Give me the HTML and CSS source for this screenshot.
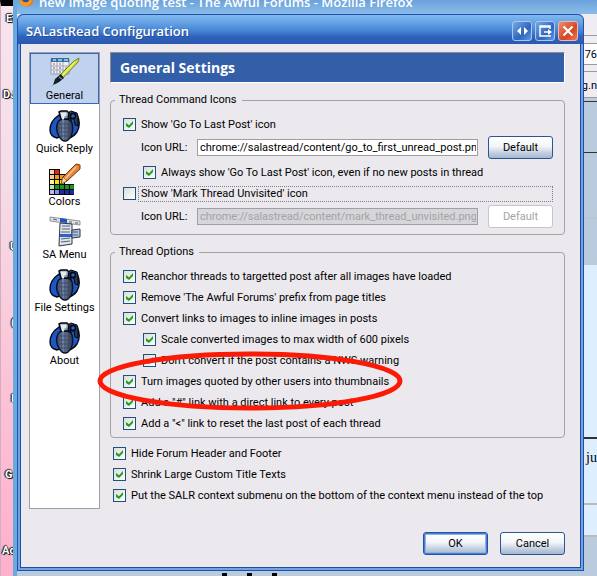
FILE: index.html
```html
<!DOCTYPE html>
<html lang="en">
<head>
<meta charset="utf-8">
<title>SALastRead Configuration</title>
<link rel="stylesheet" href="styles.css">
</head>
<body>
<svg class="defs" aria-hidden="true">
  <defs>
    <linearGradient id="metal" x1="0" x2="1">
      <stop offset="0" stop-color="#33405a"/><stop offset=".4" stop-color="#7385a8"/><stop offset="1" stop-color="#2c3850"/>
    </linearGradient>
    <symbol id="grenade" viewBox="0 0 32 32">
      <path d="M10 5C4 9 1 15 1 20c0 4 3 7 7 8l5-2V8z" fill="#1c56c8" stroke="#05070f" stroke-width="1.400"/>
      <path d="M18 4c3-2 8-2 10 1 3 5 3 12 0 17-2 3-5 5-8 6l-2-9 4-9z" fill="#1c56c8" stroke="#05070f" stroke-width="1.400"/>
      <path d="M17 4l5-3 6 2 1 3v10l-3-1-1-6-7-1z" fill="#2b3852" stroke="#05070f"/>
      <circle cx="24" cy="6" r="2.500" fill="#2a62cf" stroke="#05070f" stroke-width="1.400"/>
      <path d="M9 12c1-2 4-3 7-3s6 1 7 4c1 4 1 9-1 13-1 3-4 5-6 5s-5-2-6-5c-3-5-3-10-1-14z" fill="url(#metal)" stroke="#0a1020" stroke-width="1.400"/>
      <path d="M9 14h14M8 18h15M8 22h15M10 26h12M12 11l1 19M16 10v20M20 11l-1 19" fill="none" stroke="#33425f" stroke-width=".7"/>
      <path d="M10 2l2-1h6l2 2-1 6h-7z" fill="#8896ac" stroke="#05070f" stroke-width="1.400"/>
      <path d="M11.500 2.500h6v3l-2 1-.5 3h-2z" fill="#e6ebf2"/>
    </symbol>
    <symbol id="general" viewBox="0 0 32 32">
      <path d="M2 2h18v15H2z" fill="#eef1f6" stroke="#8c98ad"/>
      <path d="M2 1h18v4H2z" fill="#2f6f9d"/>
      <path d="M4 3h3M9 3h4M15 3h4" stroke="#b9d7ea" stroke-width="1.400"/>
      <path d="M2 9h18M2 13h18M8 5v12M14 5v12" stroke="#9ba5b7" fill="none"/>
      <path d="M4 7h2M10 7h2M16 11h2M4 15h2" stroke="#d25648"/>
      <path d="M10 11h2M4 11h2M10 15h2" stroke="#58657c"/>
      <path d="M25 4l5-3-1 4L11 24l-5 3 2-6z" fill="#d3e236" stroke="#5e6b16" stroke-width=".8"/>
      <path d="M26 5L11 21" stroke="#f7ffa1"/>
      <path d="M12 17l3 4-5 4-6 3 2-6z" fill="#16202c"/>
      <path d="M10 20l3 2M4 28l-2 2" stroke="#a3afb6"/>
    </symbol>
    <symbol id="colors" viewBox="0 0 32 32">
      <path d="M0 6h11v5h5v10h9v11H0z" fill="#080808"/>
      <path d="M1 7h4v4H1z" fill="#fbd9b0"/><path d="M6 7h4v4H6z" fill="#f02218"/>
      <path d="M1 12h4v4H1z" fill="#f7c891"/><path d="M6 12h4v4H6zM11 12h4v4h-4z" fill="#f09a24"/>
      <path d="M1 17h4v4H1z" fill="#fff5a0"/><path d="M6 17h4v4H6zM11 17h4v4h-4z" fill="#f2e313"/>
      <path d="M1 22h4v4H1z" fill="#b8e6b0"/><path d="M6 22h4v4H6zM11 22h4v4h-4zM16 22h4v4h-4zM21 22h4v4h-4z" fill="#19971d"/>
      <path d="M1 27h4v4H1z" fill="#b7b9f1"/><path d="M6 27h4v4H6z" fill="#8790e6"/><path d="M11 27h4v4h-4zM16 27h4v4h-4zM21 27h4v4h-4z" fill="#1b2aa8"/>
      <path d="M27 1l4 1v4L18 18l-6 3 2-7z" fill="#e8843a" stroke="#70380f"/>
      <path d="M27 4L16 16" stroke="#ffc58d" stroke-width="1.500"/>
      <path d="M14 14l4 4-6 3z" fill="#f3d9ae" stroke="#70380f" stroke-width=".6"/>
    </symbol>
    <symbol id="menu" viewBox="0 0 32 32">
      <path d="M1 1l30 4v4L1 5z" fill="#dfe1e6" stroke="#777c86" stroke-width=".8"/>
      <path d="M11 2l7 1v4l-7-1z" fill="#1e55bd"/>
      <path d="M4 3l4 1M20 6h3M26 7h3" stroke="#555b67"/>
      <path d="M11 7l12 1v20l-13 2z" fill="#dde4ef" stroke="#30353f"/>
      <path d="M13 10h8M13 13h8M12 16h9M12 23l9-1M12 26l9-1" stroke="#59616f" fill="none"/>
      <path d="M11 18h12v3H11z" fill="#2a63c4"/>
      <path d="M23 14l8-1v8l-8 1z" fill="#b9c5d8" stroke="#30353f"/>
      <path d="M24 16h5M24 19h5" stroke="#2e5ea9"/>
    </symbol>
  </defs>
</svg>

<div class="desktop" aria-hidden="true">
  <div class="wallpaper">
    <span class="tag t1">Ev</span><span class="tag t2">DJ</span><span class="tag t3">U</span><span class="tag t4">(</span><span class="tag t5">I</span><span class="tag t6">G</span><span class="tag t7">Ac</span>
  </div>
  <div class="browser">
    <div class="browser-title">
      <svg class="fox" viewBox="0 0 16 16"><circle cx="8" cy="8" r="7.500" fill="#e8761b"/><circle cx="8" cy="7" r="4.500" fill="#24509d"/><path d="M1 6c1 5 5 6 9 4l3-5c2 5-1 10-6 10S0 11 1 6z" fill="#f39a22"/></svg>
      <span>new image quoting test - The Awful Forums - Mozilla Firefox</span>
    </div>
    <div class="browser-page">
      <div class="chrome menu-strip"></div>
      <div class="chrome url-strip"><span class="url-end">76</span></div>
      <div class="chrome tab-strip">g.n</div>
      <div class="post gap"></div>
      <div class="post head"></div>
      <div class="post head second"></div>
      <div class="post spacer"></div>
      <div class="post light tall"></div>
      <div class="post light reply"><span>t ju</span></div>
      <div class="post light last"></div>
      <div class="post rest"><i></i><i></i><i></i></div>
    </div>
  </div>
</div>

<form class="dialog" onsubmit="return false">
  <header class="titlebar">
    <h1>SALastRead Configuration</h1>
    <div class="window-buttons">
      <button type="button" aria-label="Resize"><svg viewBox="0 0 18 18"><path d="M8 5v8L4 9zM11 5v8l4-4z" fill="#fff"/></svg></button>
      <button type="button" aria-label="Move out"><svg viewBox="0 0 18 18"><path d="M14 7V4H4v10h10v-1M4 5h10M8 10h6" fill="none" stroke="#fff" stroke-width="1.500"/><path d="M12 7l4 3-4 3z" fill="#fff"/></svg></button>
      <button type="button" class="close" aria-label="Close"><svg viewBox="0 0 18 18"><path d="M4.500 4.500l9 9M13.500 4.500l-9 9" stroke="#fff" stroke-width="2.200"/></svg></button>
    </div>
  </header>

  <div class="content">
    <nav class="sidebar">
      <button type="button" class="pane selected"><svg><use href="#general"/></svg>General</button>
      <button type="button" class="pane"><svg><use href="#grenade"/></svg>Quick Reply</button>
      <button type="button" class="pane"><svg><use href="#colors"/></svg>Colors</button>
      <button type="button" class="pane"><svg><use href="#menu"/></svg>SA Menu</button>
      <button type="button" class="pane"><svg><use href="#grenade"/></svg>File Settings</button>
      <button type="button" class="pane"><svg><use href="#grenade"/></svg>About</button>
    </nav>

    <main>
      <h2>General Settings</h2>
      <fieldset>
        <legend>Thread Command Icons</legend>
        <label class="check"><input type="checkbox" checked><span>Show 'Go To Last Post' icon</span></label>
        <div class="url-row">
          <label for="url1">Icon URL:</label>
          <input id="url1" type="text" value="chrome://salastread/content/go_to_first_unread_post.png">
          <button type="button" class="button">Default</button>
        </div>
        <label class="check nested"><input type="checkbox" checked><span>Always show 'Go To Last Post' icon, even if no new posts in thread</span></label>
        <label class="check focused"><input type="checkbox"><span>Show 'Mark Thread Unvisited' icon</span></label>
        <div class="url-row">
          <label for="url2">Icon URL:</label>
          <input id="url2" type="text" value="chrome://salastread/content/mark_thread_unvisited.png" disabled>
          <button type="button" class="button" disabled>Default</button>
        </div>
      </fieldset>
      <fieldset>
        <legend>Thread Options</legend>
        <label class="check"><input type="checkbox" checked><span>Reanchor threads to targetted post after all images have loaded</span></label>
        <label class="check"><input type="checkbox" checked><span>Remove 'The Awful Forums' prefix from page titles</span></label>
        <label class="check"><input type="checkbox" checked><span>Convert links to images to inline images in posts</span></label>
        <label class="check nested"><input type="checkbox" checked><span>Scale converted images to max width of 600 pixels</span></label>
        <label class="check nested"><input type="checkbox" checked><span>Don't convert if the post contains a NWS warning</span></label>
        <label class="check circled"><input type="checkbox" checked><span>Turn images quoted by other users into thumbnails</span>
          <svg class="ring" viewBox="0 0 306 60"><ellipse cx="153" cy="30" rx="150" ry="27" fill="none" stroke="#fb1a05" stroke-width="5"/></svg>
        </label>
        <label class="check"><input type="checkbox" checked><span>Add a "#" link with a direct link to every post</span></label>
        <label class="check"><input type="checkbox" checked><span>Add a "&lt;" link to reset the last post of each thread</span></label>
      </fieldset>
      <div class="general-options">
        <label class="check"><input type="checkbox" checked><span>Hide Forum Header and Footer</span></label>
        <label class="check"><input type="checkbox" checked><span>Shrink Large Custom Title Texts</span></label>
        <label class="check"><input type="checkbox" checked><span>Put the SALR context submenu on the bottom of the context menu instead of the top</span></label>
      </div>
    </main>
  </div>

  <footer>
    <button type="submit" class="button default">OK</button>
    <button type="button" class="button">Cancel</button>
  </footer>
</form>
</body>
</html>
```

FILE: styles.css
```css
* { box-sizing: border-box; }

body {
  margin: 0;
  min-height: 100vh;
  padding: 14px 13px 5px 17px;
  position: relative;
  overflow: hidden;
  font: 11px/14px Roboto, sans-serif;
  color: #000;
}

button, input { font: inherit; color: inherit; }
.defs { position: absolute; width: 0; height: 0; }

/* Desktop behind the dialog */
.desktop {
  position: absolute;
  inset: 0;
  z-index: -1;
  display: flex;
  overflow: hidden;
}
.wallpaper {
  flex: none;
  width: 13px;
  position: relative;
  overflow: hidden;
  border-top: 6px solid #000;
  border-left: 1px solid #d5aebc;
  background: linear-gradient(#f7e4ee, #f5dde8 30%, #fbc4d6 65%, #ffb0ca);
}
.tag {
  position: absolute;
  color: #fff;
  font-weight: bold;
  text-shadow: 1px 1px 1px #000, -1px 0 1px #000, 0 -1px 1px #333;
}
.t1 { left: 5px; top: 6px; }
.t2 { left: 2px; top: 82px; }
.t3 { left: 9px; top: 234px; }
.t4 { left: 10px; top: 310px; }
.t5 { left: 10px; top: 386px; }
.t6 { left: 4px; top: 462px; }
.t7 { left: 1px; top: 538px; }

.browser {
  flex: 1;
  min-width: 0;
  display: flex;
  flex-direction: column;
  border-left: 4px solid #68aade;
}
.browser-title {
  height: 14px;
  flex: none;
  display: flex;
  gap: 5px;
  padding-left: 2px;
  align-items: flex-end;
  overflow: hidden;
  white-space: nowrap;
  background: linear-gradient(#6ba2db, #8abce8);
  color: #fff;
  font: 600 13px/20px "Open Sans", sans-serif;
}
.browser-title span { margin-bottom: 2px; }
.fox { width: 15px; height: 15px; margin-bottom: 7px; flex: none; }
.browser-page {
  flex: 1;
  display: flex;
  flex-direction: column;
  background: #b9cbdc;
}
.chrome, .post { flex: none; overflow: hidden; text-align: right; }
.chrome { background: #efedf1; border-bottom: 1px solid #9b9b9f; }
.menu-strip { height: 22px; }
.url-strip { height: 36px; padding: 7px 0 6px; }
.url-end {
  display: block;
  height: 22px;
  line-height: 22px;
  background: #fff;
  border: solid #9b9b9f;
  border-width: 1px 0;
}
.tab-strip { height: 26px; line-height: 28px; }
.post.gap { height: 4px; border-bottom: 1px solid #333; }
.post.head { height: 51px; border-bottom: 1px solid #333; }
.post.second { height: 66px; border-color: #c2c2c2; }
.post.spacer { height: 46px; }
.post.light { background: #ddeffe; border-bottom: 2px solid #bbb; }
.post.tall { height: 174px; border-color: #333; }
.post.reply { height: 66px; font: 14px/38px "Liberation Serif", serif; }
.post.last { height: 32px; }
.post.rest {
  flex: 1;
  display: flex;
  align-items: flex-end;
  gap: 20px;
  padding-left: 205px;
}
.rest i { width: 5px; height: 3px; background: #000; }

/* Dialog window */
.dialog {
  border: solid #2450ad;
  border-width: 0 1px 1px;
  box-shadow: inset 2px 0 #6da4e2, inset -2px 0 #6da4e2, inset 0 -2px #6da4e2, inset 3px 0 #234a9c, inset -3px 0 #234a9c, inset 0 -3px #234a9c;
  padding: 0 3px 3px;
  border-radius: 6px 6px 0 0;
  background: #ebe9ed;
}
.titlebar {
  display: flex;
  align-items: center;
  justify-content: space-between;
  height: 30px;
  margin: 0 -3px;
  padding: 3px 5px 0 8px;
  border-top: 1px solid #2450ad;
  border-radius: 6px 6px 0 0;
  background: linear-gradient(#80b9f0, #67a3e5 25%, #4484d4 55%, #2f62bb 75%, #2c59ae);
}
h1 {
  margin: 0;
  color: #fff;
  font: 600 13px/18px "Open Sans", sans-serif;
  text-shadow: 1px 1px #254d94;
}
.window-buttons { display: flex; gap: 3px; }
.window-buttons button {
  width: 20px;
  height: 20px;
  padding: 0;
  display: grid;
  border: 1px solid #a5c9f0;
  border-radius: 3px;
  background: linear-gradient(135deg, #75a8e4, #3065bd 60%, #5d9ae0);
}
.window-buttons .close {
  border-color: #e8b9b5;
  background: linear-gradient(135deg, #e88d72, #d64622 60%, #ee7b52);
}

.content {
  display: grid;
  grid-template-columns: 71px minmax(0, 1fr);
  gap: 10px;
  padding: 8px 15px 0 8px;
}
.sidebar {
  display: flex;
  flex-direction: column;
  gap: 2px;
  border: 1px solid #a0a0a4;
  background: #fff;
}
.pane {
  height: 51px;
  padding: 3px 0 0;
  display: flex;
  flex-direction: column;
  align-items: center;
  border: 1px solid transparent;
  background: none;
  white-space: nowrap;
  line-height: 14px;
}
.pane svg { width: 32px; height: 32px; flex: none; }
.pane.selected { background: #c1d2ee; border-color: #3169c0; }

h2 {
  margin: 0 0 10px;
  height: 31px;
  padding: 0 9px;
  border: 1px solid #8d8d90;
  border-color: #8d8d90 #fff #fff #8d8d90;
  background: #335ea8;
  color: #fff;
  font: bold 14px/30px "Open Sans", sans-serif;
}
fieldset {
  min-width: 0;
  margin: 0 0 10px;
  padding: 7px 11px 3px 12px;
  border: 1px solid #a3a3a7;
  border-radius: 4px;
}
legend { margin-left: -8px; padding: 0 5px 0 4px; }

.check {
  display: flex;
  align-items: center;
  gap: 5px;
  height: 21px;
  white-space: nowrap;
}
.check.nested { padding-left: 20px; }
.check input {
  appearance: none;
  flex: none;
  width: 13px;
  height: 13px;
  margin: 0;
  display: grid;
  place-items: center;
  border: 1px solid #1c5180;
  background: linear-gradient(135deg, #dcdcd7, #fff);
}
.check input:checked::after {
  content: "";
  width: 7px;
  height: 7px;
  background: #21a121;
  clip-path: polygon(0 29%, 43% 60%, 100% 0, 100% 42%, 43% 100%, 0 71%);
}
.check.focused { gap: 2px; }
.check.focused span {
  flex: 1;
  padding-left: 2px;
  border: 1px dotted #808084;
}
.check.circled { position: relative; }
.ring {
  position: absolute;
  left: -26px;
  top: -20px;
  width: 306px;
  height: 60px;
  z-index: 1;
}
.general-options { margin-top: -5px; padding: 0 0 3px 3px; }

.url-row {
  display: flex;
  align-items: center;
  gap: 10px;
  margin: 1px 0 3px;
  padding-left: 18px;
}
.url-row label { width: 46px; white-space: nowrap; }
.url-row input {
  flex: 1;
  min-width: 0;
  height: 17px;
  padding: 0 1px 0 2px;
  border: 1px solid #a0a0a4;
  background: #fff;
}
.url-row input:disabled { background: #d6d5d9; color: #a3a3a7; }

.button {
  width: 65px;
  height: 23px;
  padding: 0;
  border: 1px solid #2b568f;
  border-radius: 3px;
  background: linear-gradient(#fff, #f2f5f9 45%, #c4d0e0 75%, #a5b7d0);
}
.button:disabled { background: #fff; border-color: #c6c5c9; color: #a3a3a7; }
.button.default { border-color: #2450ad; box-shadow: inset 0 0 0 1px #4a7fd0, inset 0 0 0 2px #8fb2e4; }

footer {
  display: flex;
  justify-content: flex-end;
  gap: 12px;
  padding: 23px 15px 12px;
}
```
